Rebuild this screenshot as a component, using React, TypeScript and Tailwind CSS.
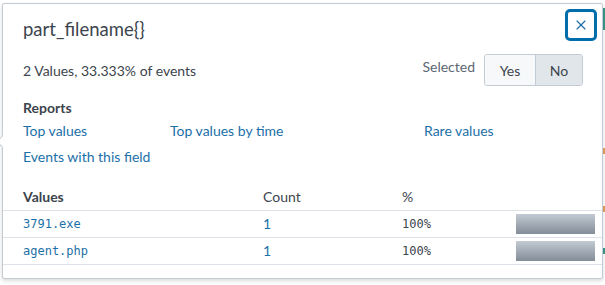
import { X } from "lucide-react";

const rows = [
  { value: "3791.exe", count: 1, pct: 100 },
  { value: "agent.php", count: 1, pct: 100 },
];

export default function App() {
  return (
    <div className="relative h-[285px] w-[605px] overflow-hidden bg-white font-['Lato',sans-serif] text-[#3c444d]">
      {/* page behind the popover */}
      <div className="absolute right-0 top-[8px] h-[22px] w-[2px] bg-[#3a9a8a]" />
      <div className="absolute right-0 top-[148px] h-[6px] w-[2px] bg-[#e8a060]" />
      <div className="absolute right-0 top-[206px] h-[6px] w-[2px] bg-[#e8a060]" />
      <div className="absolute right-0 top-[248px] h-[6px] w-[2px] bg-[#3a9a8a]" />

      <div className="absolute left-[2px] top-[3px] h-[276px] w-[601px] rounded-[2px] border border-[#c3cbd4] bg-white shadow-[0_2px_4px_rgba(0,0,0,0.15)]">
        {/* arrow */}
        <div className="absolute left-[-5px] top-[133px] h-[9px] w-[9px] rotate-45 border-b border-l border-[#c3cbd4] bg-white" />

        <div className="flex items-start justify-between pl-[20px] pr-[5px] pt-[5px]">
          <h1 className="pt-[9px] text-[18.5px] leading-[22px] text-[#3c444d]">
            part_filename{"{}"}
          </h1>
          <button className="flex h-[32px] w-[32px] items-center justify-center rounded-[5px] border-[3px] border-[#006eaa] text-[#1a6aa6]">
            <X size={16} strokeWidth={1.7} />
          </button>
        </div>

        <div className="mt-[13px] flex items-center justify-between pl-[20px] pr-[19px] text-[14px]">
          <div>2 Values, 33.333% of events</div>
          <div className="flex items-center">
            <span className="mr-[9px] mt-[-8px] text-[#5c6773]">Selected</span>
            <div className="flex h-[32px] overflow-hidden rounded-[3px] border border-[#c3cbd4]">
              <span className="flex w-[50px] items-center justify-center bg-[#f7f8fa] text-[#3c444d]">
                Yes
              </span>
              <span className="flex w-[47px] items-center justify-center border-l border-[#c3cbd4] bg-[#e1e6eb] text-[#3c444d]">
                No
              </span>
            </div>
          </div>
        </div>

        <div className="mt-[13px] pl-[20px] text-[14px]">
          <div className="font-bold leading-[18px]">Reports</div>
          <div className="mt-[5px] grid grid-cols-[147px_254px_auto] leading-[18px] text-[#1c70a8]">
            <span>Top values</span>
            <span>Top values by time</span>
            <span>Rare values</span>
          </div>
          <div className="mt-[8px] leading-[18px] text-[#1c70a8]">
            Events with this field
          </div>
        </div>

        <table className="mt-[20px] w-[599px] table-fixed border-collapse text-[14px]">
          <thead>
            <tr className="border-b border-[#dde2e8]">
              <th className="h-[20px] w-[260px] pb-[3px] pl-[20px] text-left align-top font-bold">
                Values
              </th>
              <th className="w-[139px] pb-[3px] text-left align-top font-normal">
                Count
              </th>
              <th className="w-[114px] pb-[3px] text-left align-top font-normal">
                %
              </th>
              <th />
            </tr>
          </thead>
          <tbody>
            {rows.map((r) => (
              <tr key={r.value} className="h-[27px] border-b border-[#dde2e8]">
                <td className="p-0 pl-[20px] align-middle font-['DejaVu_Sans_Mono',monospace] text-[12px] leading-[16px] text-[#1c70a8]">
                  <div>{r.value}</div>
                </td>
                <td className="p-0 align-middle leading-[16px] text-[#1c70a8]">
                  <div className="mt-[-1px]">{r.count}</div>
                </td>
                <td className="p-0 align-middle font-['DejaVu_Sans_Mono',monospace] text-[12px] leading-[16px] text-[#3c444d]">
                  <div>{r.pct}%</div>
                </td>
                <td className="p-0 align-middle">
                  <div className="h-[20px] w-[79px] bg-gradient-to-b from-[#c3cad3] to-[#838d98]" />
                </td>
              </tr>
            ))}
          </tbody>
        </table>
      </div>
    </div>
  );
}
